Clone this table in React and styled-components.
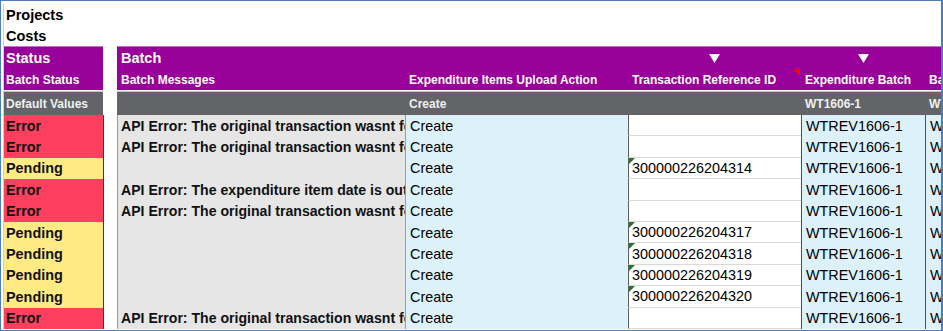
import React from 'react';
import styled, { createGlobalStyle, css } from 'styled-components';

const Global = createGlobalStyle`
  html, body { margin: 0; padding: 0; background: #ffffff; }
  body { font-family: "Liberation Sans", Arial, sans-serif; }
`;

const COLS = '3px 99px 14px 288px 223px 173px 124px 60px';

const PURPLE = '#990099';
const DARK = '#626467';
const RED = '#ff3f5e';
const YELLOW = '#ffea84';
const MSG = '#e6e6e6';
const BLUE = '#ddf1fb';

const Frame = styled.div`
  width: 943px;
  height: 331px;
  box-sizing: border-box;
  border: 1px solid #4a7ebd;
  border-right-width: 2px;
  padding-top: 3px;
  overflow: hidden;
  background: #ffffff;
`;

const Row = styled.div`
  display: grid;
  grid-template-columns: ${COLS};
  height: ${(p) => p.$h}px;
  margin-top: ${(p) => p.$gap || 0}px;
`;

const Cell = styled.div`
  box-sizing: border-box;
  position: relative;
  display: flex;
  align-items: center;
  min-width: 0;
  padding: 0 ${(p) => (p.$pad != null ? p.$pad : 4)}px;
  white-space: nowrap;
  overflow: hidden;
  font-size: 14.4px;
  color: #000000;
`;

const Gutter = styled.div`
  box-sizing: border-box;
  border-right: 1px solid #d0d0d0;
`;

const Blank = styled.div``;

const Title = styled(Cell)`
  grid-column: 2 / span 3;
  font-weight: 700;
  font-size: 14.5px;
`;

const HeadCell = styled(Cell)`
  background: ${PURPLE};
  color: #ffffff;
  font-weight: 700;
  font-size: ${(p) => (p.$big ? 14.5 : 12)}px;
  justify-content: ${(p) => (p.$center ? 'center' : 'flex-start')};
  ${(p) =>
    p.$top &&
    css`
      border-top: 1px solid #c56fc5;
    `}
  ${(p) =>
    p.$comment &&
    css`
      &::after {
        content: '';
        position: absolute;
        top: 0;
        right: 1px;
        width: 0;
        height: 0;
        border-top: 7px solid #ff0000;
        border-left: 7px solid transparent;
      }
    `}
`;

const DefaultCell = styled(Cell)`
  background: ${DARK};
  color: #f0f0f0;
  font-weight: 700;
  font-size: 12px;
  border-top: 1px solid #c3c3c3;
`;

const GapCell = styled.div`
  box-sizing: border-box;
  border-left: ${(p) => (p.$line ? '1px solid #3c3c3c' : 'none')};
`;

const StatusCell = styled(Cell)`
  background: ${(p) => (p.$state === 'Error' ? RED : YELLOW)};
  font-weight: 700;
  color: #111111;
`;

const MessageCell = styled(Cell)`
  background: ${MSG};
  font-weight: 700;
  font-size: 14.1px;
  color: #111111;
  padding-left: 3px;
  border-left: 1px solid #9a9a9a;
`;

const ActionCell = styled(Cell)`
  background: ${BLUE};
  border-left: 1px solid #9c9c9c;
`;

const RefCell = styled(Cell)`
  background: #ffffff;
  padding-left: 3px;
  border-left: 1px solid #5e5e5e;
  border-bottom: 1px solid #dadada;
  ${(p) =>
    p.$flag &&
    css`
      &::before {
        content: '';
        position: absolute;
        top: 0;
        left: 0;
        width: 0;
        height: 0;
        border-top: 6px solid #1d7a2a;
        border-right: 6px solid transparent;
      }
    `}
`;

const BatchCell = styled(Cell)`
  background: ${BLUE};
  border-left: 1px solid #4e4e4e;
`;

const Arrow = () => (
  <svg width="11" height="9" viewBox="0 0 11 9" aria-hidden="true">
    <polygon points="0,0 11,0 5.5,9" fill="#ffffff" />
  </svg>
);

const rows = [
  { s: 'Error', m: 'API Error: The original transaction wasnt found', r: '' },
  { s: 'Error', m: 'API Error: The original transaction wasnt found', r: '' },
  { s: 'Pending', m: '', r: '300000226204314' },
  { s: 'Error', m: 'API Error: The expenditure item date is outside', r: '' },
  { s: 'Error', m: 'API Error: The original transaction wasnt found', r: '' },
  { s: 'Pending', m: '', r: '300000226204317' },
  { s: 'Pending', m: '', r: '300000226204318' },
  { s: 'Pending', m: '', r: '300000226204319' },
  { s: 'Pending', m: '', r: '300000226204320' },
  { s: 'Error', m: 'API Error: The original transaction wasnt found', r: '' },
];

export default function App() {
  return (
    <>
      <Global />
      <Frame>
        <Row $h={21}>
          <Gutter />
          <Title $pad={2}>Projects</Title>
        </Row>
        <Row $h={21}>
          <Gutter />
          <Title $pad={2}>Costs</Title>
        </Row>

        <Row $h={23}>
          <Gutter />
          <HeadCell $big $top $pad={2}>Status</HeadCell>
          <Blank />
          <HeadCell $big $top>Batch</HeadCell>
          <HeadCell $top />
          <HeadCell $top $center>
            <Arrow />
          </HeadCell>
          <HeadCell $top $center>
            <Arrow />
          </HeadCell>
          <HeadCell $top />
        </Row>
        <Row $h={21}>
          <Gutter />
          <HeadCell $pad={2}>Batch Status</HeadCell>
          <Blank />
          <HeadCell>Batch Messages</HeadCell>
          <HeadCell>Expenditure Items Upload Action</HeadCell>
          <HeadCell $comment>Transaction Reference ID</HeadCell>
          <HeadCell>Expenditure Batch</HeadCell>
          <HeadCell>Batch Name</HeadCell>
        </Row>

        <Row $h={24} $gap={1}>
          <Gutter />
          <DefaultCell $pad={2}>Default Values</DefaultCell>
          <Blank />
          <DefaultCell />
          <DefaultCell>Create</DefaultCell>
          <DefaultCell />
          <DefaultCell>WT1606-1</DefaultCell>
          <DefaultCell>WT1606-1</DefaultCell>
        </Row>

        {rows.map((row, i) => (
          <Row key={i} $h={21.4}>
            <Gutter />
            <StatusCell $state={row.s} $pad={2}>
              {row.s}
            </StatusCell>
            <GapCell $line />
            <MessageCell>{row.m}</MessageCell>
            <ActionCell>Create</ActionCell>
            <RefCell $flag={!!row.r}>{row.r}</RefCell>
            <BatchCell>WTREV1606-1</BatchCell>
            <BatchCell>WTREV1606-1</BatchCell>
          </Row>
        ))}
      </Frame>
    </>
  );
}
